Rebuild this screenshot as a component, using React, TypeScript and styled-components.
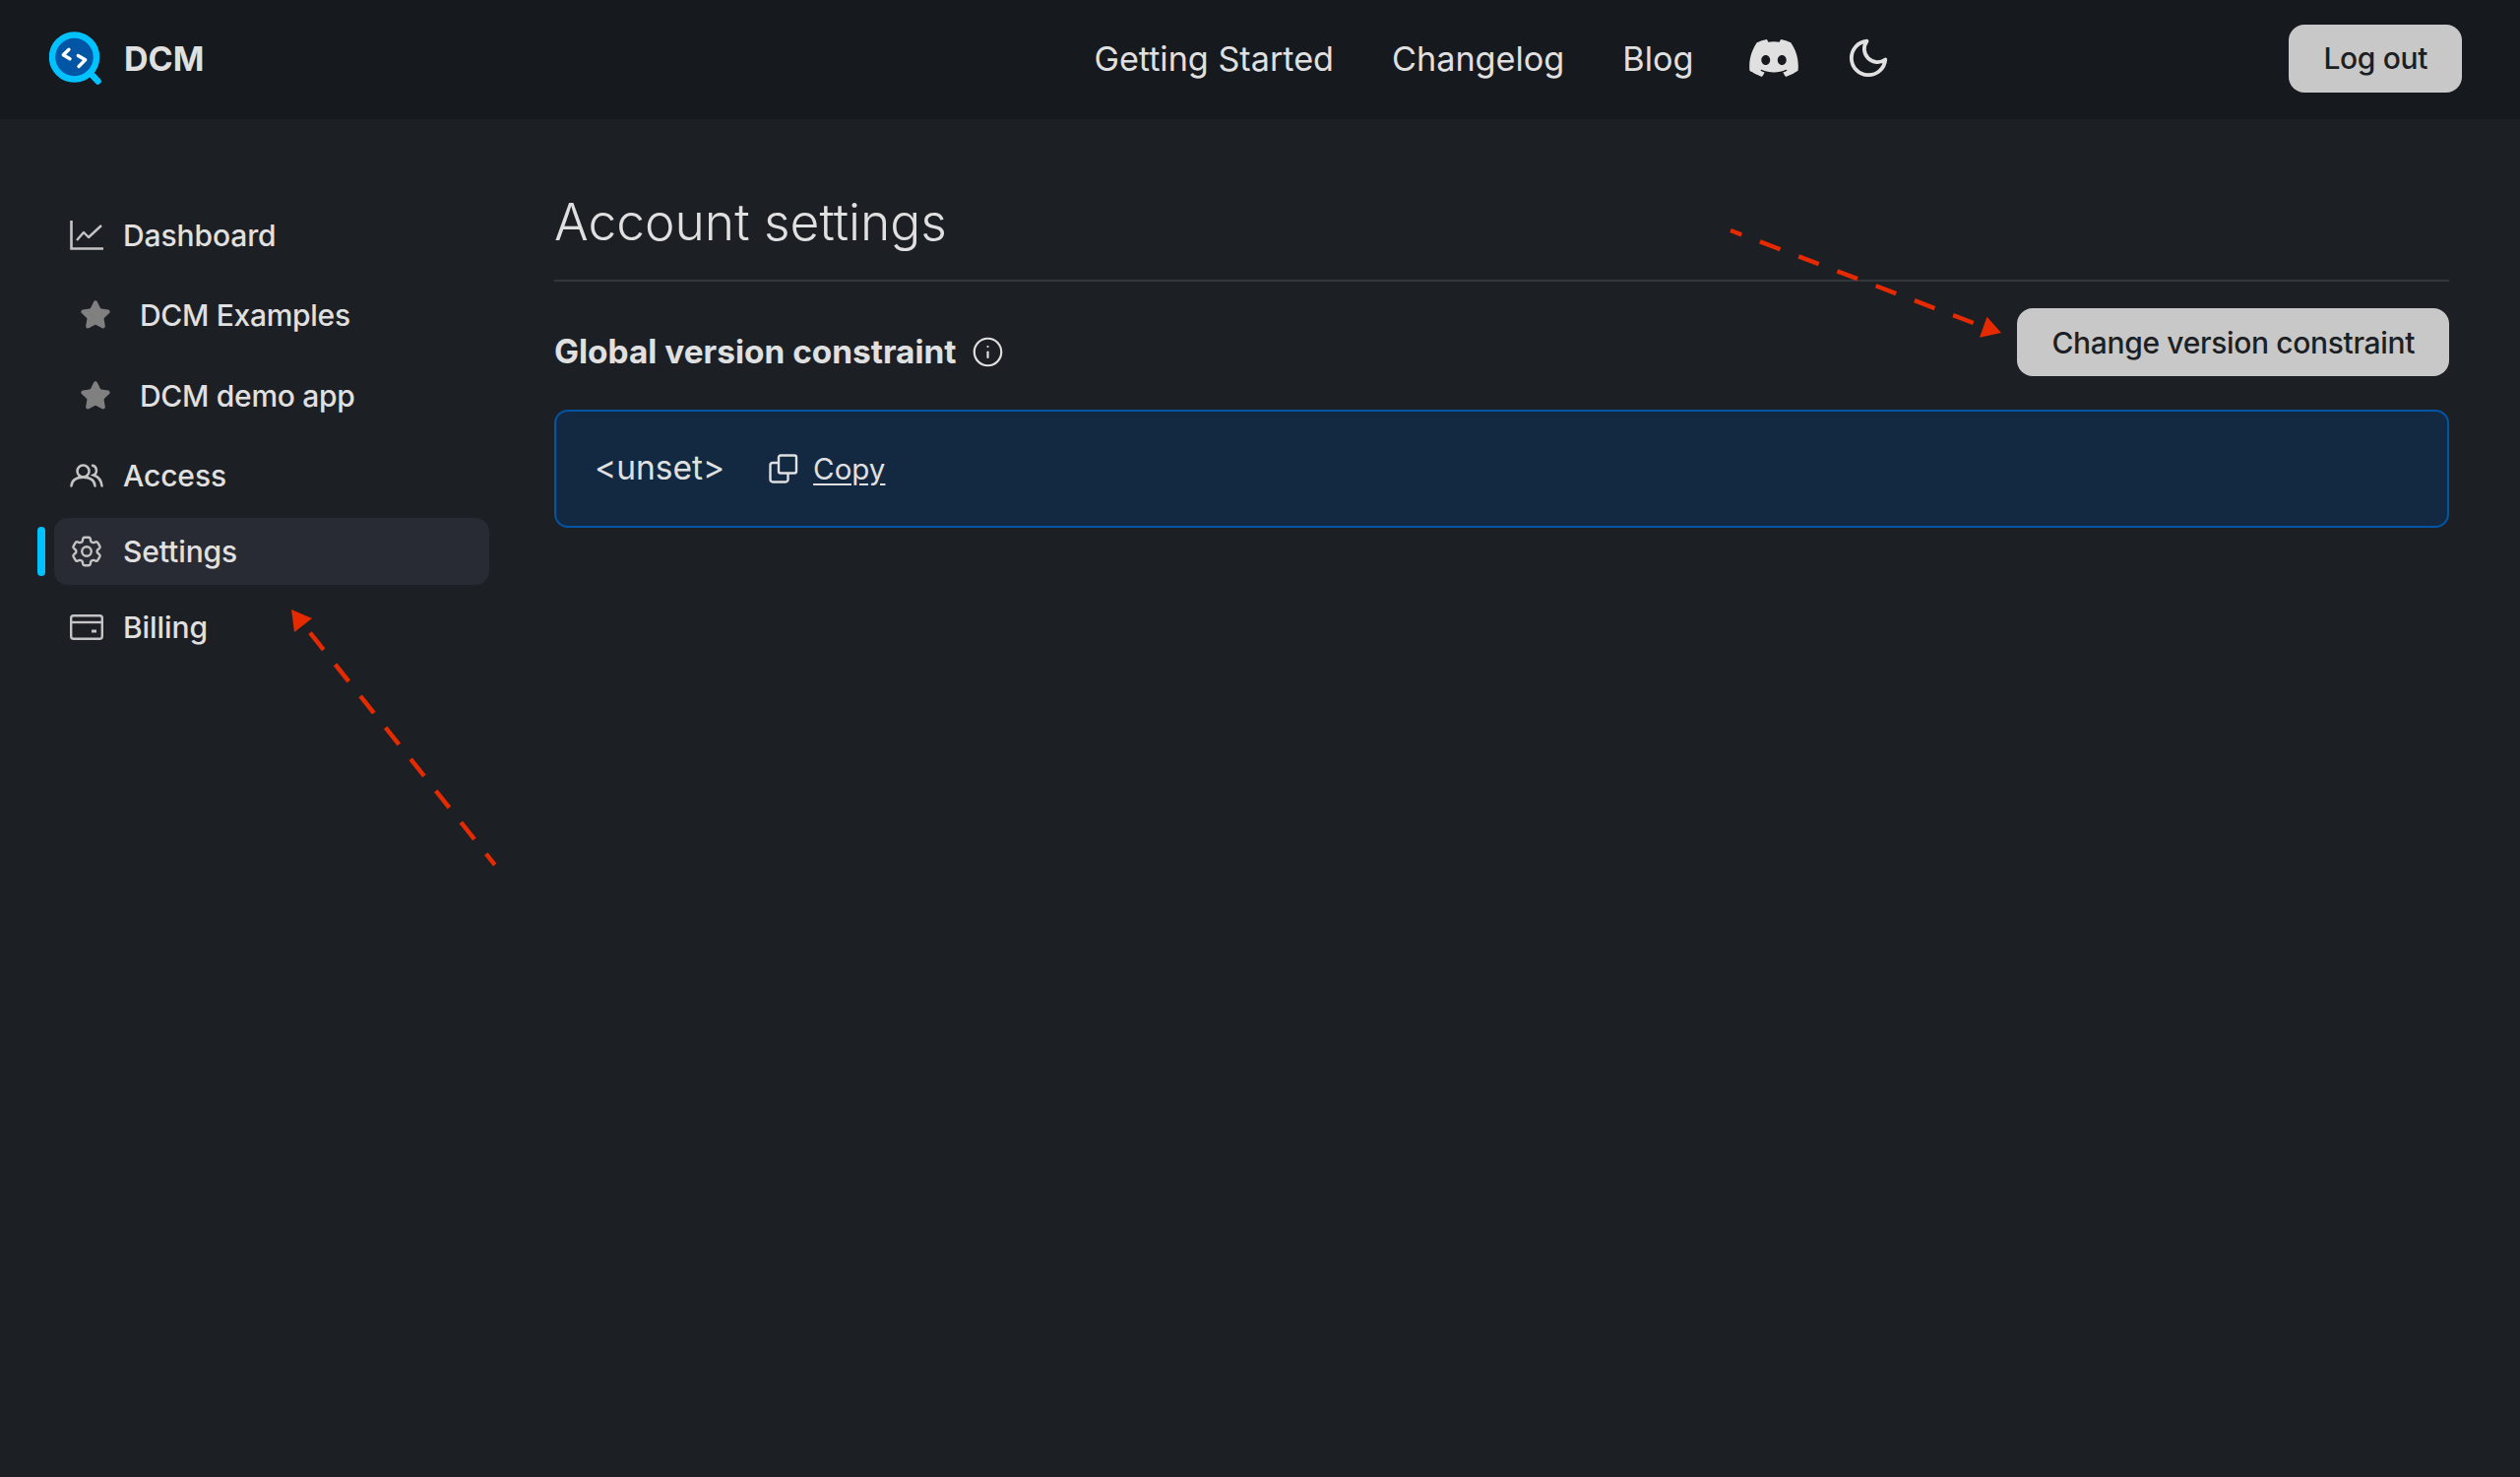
import React from "react";
import styled, { createGlobalStyle } from "styled-components";
import { FaDiscord } from "react-icons/fa";
import { FiMoon } from "react-icons/fi";
import { HiOutlineCog6Tooth } from "react-icons/hi2";
import { Info, Star } from "lucide-react";

const Global = createGlobalStyle`
  html, body { margin: 0; padding: 0; background: #1c1f24; }
  body { font-family: Inter, "Liberation Sans", sans-serif; color: #e0e0e0; }
  * { box-sizing: border-box; }
`;

const Page = styled.div`
  position: relative;
  min-height: 1500px;
  display: flex;
  flex-direction: column;
`;

const Header = styled.header`
  height: 121px;
  background: #16191e;
  display: flex;
  align-items: center;
  padding: 0 59px 3px 50px;
`;

const Brand = styled.div`
  display: flex;
  align-items: center;
  gap: 23px;
  font-size: 34px;
  font-weight: 700;
  color: #e0e0e0;
`;

const TopNav = styled.nav`
  margin-left: 904px;
  display: flex;
  align-items: center;
  gap: 59px;
`;

const TopLink = styled.a`
  font-size: 34.2px;
  font-weight: 400;
  color: #e0e0e0;
`;

const IconSlot = styled.span<{ $pull?: number }>`
  display: flex;
  align-items: center;
  color: #e0e0e0;
  margin-left: ${(p) => p.$pull ?? 0}px;
`;

const Button = styled.button`
  height: 69px;
  padding: 0 35px;
  border: none;
  border-radius: 16px;
  background: #c8c8c8;
  color: #1c1f24;
  font-family: inherit;
  font-size: 30px;
  font-weight: 500;
  letter-spacing: -0.35px;
`;

const LogoutButton = styled(Button)`
  margin-left: auto;
`;

const Body = styled.div`
  display: flex;
  flex: 1;
`;

const Sidebar = styled.aside`
  width: 563px;
  flex: none;
  padding: 84px 66px 0 55px;
  display: flex;
  flex-direction: column;
  gap: 9px;
`;

const NavRow = styled.a<{ $active?: boolean }>`
  position: relative;
  height: 68px;
  display: flex;
  align-items: center;
  gap: 20px;
  padding-left: 16px;
  border-radius: 14px;
  font-size: 30px;
  font-weight: 500;
  letter-spacing: -0.1px;
  color: #e0e0e0;
  background: ${(p) => (p.$active ? "#282b33" : "transparent")};
`;

const RowIcon = styled.span`
  width: 34px;
  flex: none;
  display: flex;
  align-items: center;
  justify-content: center;
  color: #c4c4c4;
  svg { flex: none; }
`;

const ActiveBar = styled.span`
  position: absolute;
  left: -17px;
  top: 9px;
  width: 8px;
  height: 50px;
  border-radius: 4px;
  background: #00c2ff;
`;

const SubList = styled.div`
  margin: -3px 0;
  display: flex;
  flex-direction: column;
`;

const SubRow = styled.a`
  height: 82px;
  display: flex;
  align-items: center;
  gap: 29px;
  padding-left: 26px;
  font-size: 30px;
  font-weight: 500;
  letter-spacing: -0.3px;
  color: #e0e0e0;
  svg { color: #808080; fill: #808080; flex: none; }
`;

const Main = styled.main`
  flex: 1;
  padding: 74px 72px 0 0;
  min-width: 0;
`;

const Title = styled.h1`
  margin: 0;
  padding-bottom: 29px;
  border-bottom: 2px solid #33363b;
  font-size: 51.5px;
  line-height: 60px;
  font-weight: 300;
  color: #e0e0e0;
`;

const SectionHead = styled.div`
  margin-top: 27px;
  display: flex;
  justify-content: space-between;
  align-items: flex-start;
`;

const SectionTitle = styled.h2`
  margin: 0;
  padding-top: 24px;
  display: flex;
  align-items: center;
  gap: 15px;
  font-size: 33.4px;
  line-height: 40px;
  font-weight: 700;
  color: #e0e0e0;
`;

const InfoBox = styled.div`
  margin-top: 34px;
  height: 120px;
  display: flex;
  align-items: center;
  padding-left: 39px;
  border: 2.5px solid #0055a5;
  border-radius: 14px;
  background: #132942;
  font-size: 33.5px;
  color: #e0e0e0;
`;

const Value = styled.span`
  margin-right: 45px;
  position: relative;
  top: -1px;
`;

const CopyLink = styled.a`
  display: flex;
  align-items: center;
  gap: 15px;
  font-size: 29.5px;
  color: #e0e0e0;
  span { text-decoration: underline; text-underline-offset: 4px; }
`;

const Annotation = styled.svg`
  position: absolute;
  left: 0;
  top: 0;
  width: 2560px;
  height: 1500px;
  pointer-events: none;
`;

const Logo = () => (
  <svg width="53" height="55" viewBox="0 0 53 55" fill="none">
    <circle cx="25.5" cy="26" r="22.5" fill="#0055a5" stroke="#00c2ff" strokeWidth="6.5" />
    <path d="M41.5 42 L49.5 50.5" stroke="#00c2ff" strokeWidth="6.5" strokeLinecap="round" />
    <path d="M20 18.2 L14.3 23.8 L21 27.8" stroke="#fff" strokeWidth="3.4" strokeLinecap="round" strokeLinejoin="round" />
    <path d="M29.3 24.5 L36.7 28.8 L30 35.5" stroke="#fff" strokeWidth="3.4" strokeLinecap="round" strokeLinejoin="round" />
  </svg>
);

const ChartIcon = () => (
  <svg width="34" height="30" viewBox="0 0 34 30" fill="none" stroke="currentColor">
    <path d="M1.5 0 V28.5 H34" strokeWidth="2.6" />
    <path d="M7 20 L14 12 L19 17 L32 5" strokeWidth="2.4" strokeLinejoin="round" />
  </svg>
);

const PeopleIcon = () => (
  <svg width="34" height="24" viewBox="0 0 34 24" fill="none" stroke="currentColor" strokeWidth="2.5" strokeLinecap="round">
    <circle cx="13.5" cy="7.5" r="6" />
    <path d="M1.5 22.5 C2 17 6.5 13.8 13.5 13.8 C20.5 13.8 25 17 25.5 22.5" />
    <path d="M23 1.8 C27.5 2.5 28.5 9.5 24 11.5 C28.5 13 32 16.5 32.5 22.5" />
  </svg>
);

const CardIcon = () => (
  <svg width="34" height="26" viewBox="0 0 34 26" fill="none" stroke="currentColor" strokeWidth="2.4">
    <rect x="1.2" y="1.2" width="31.6" height="23.6" rx="2.5" />
    <path d="M1.2 8 H32.8" />
    <path d="M22 17 H27" strokeWidth="3" />
  </svg>
);

const CopyIcon = () => (
  <svg width="30" height="30" viewBox="0 0 30 30" fill="none" stroke="currentColor" strokeWidth="2.4" strokeLinejoin="round">
    <rect x="10" y="1.5" width="18" height="18" rx="2" />
    <path d="M10 9 H4 A2.5 2.5 0 0 0 1.5 11.5 V26 A2.5 2.5 0 0 0 4 28.5 H17 A2.5 2.5 0 0 0 19.5 26 V19.5" />
  </svg>
);

export default function App() {
  return (
    <Page>
      <Global />
      <Header>
        <Brand>
          <Logo />
          DCM
        </Brand>
        <TopNav>
          <TopLink>Getting Started</TopLink>
          <TopLink>Changelog</TopLink>
          <TopLink>Blog</TopLink>
          <IconSlot $pull={-4}><FaDiscord size={54} /></IconSlot>
          <IconSlot $pull={-13.5}><FiMoon size={46} /></IconSlot>
        </TopNav>
        <LogoutButton>Log out</LogoutButton>
      </Header>
      <Body>
        <Sidebar>
          <NavRow><RowIcon><ChartIcon /></RowIcon>Dashboard</NavRow>
          <SubList>
            <SubRow><Star size={32} strokeWidth={2} />DCM Examples</SubRow>
            <SubRow><Star size={32} strokeWidth={2} />DCM demo app</SubRow>
          </SubList>
          <NavRow><RowIcon><PeopleIcon /></RowIcon>Access</NavRow>
          <NavRow $active><ActiveBar /><RowIcon><HiOutlineCog6Tooth size={38} /></RowIcon>Settings</NavRow>
          <NavRow><RowIcon><CardIcon /></RowIcon>Billing</NavRow>
        </Sidebar>
        <Main>
          <Title>Account settings</Title>
          <SectionHead>
            <SectionTitle>
              Global version constraint
              <Info size={33} strokeWidth={1.6} />
            </SectionTitle>
            <Button>Change version constraint</Button>
          </SectionHead>
          <InfoBox>
            <Value>&lt;unset&gt;</Value>
            <CopyLink><CopyIcon /><span>Copy</span></CopyLink>
          </InfoBox>
        </Main>
      </Body>
      <Annotation viewBox="0 0 2560 1500" aria-hidden="true">
        <line x1="2004.7" y1="328" x2="1758" y2="234" stroke="#e62a00" strokeWidth="4.5" strokeDasharray="22 20" />
        <polygon points="2018.5,321.7 2033,338 2011,342.7" fill="#e62a00" />
        <line x1="315" y1="642.7" x2="502.7" y2="878.3" stroke="#e62a00" strokeWidth="4.5" strokeDasharray="22 19" />
        <polygon points="296,619 317,628 299,642" fill="#e62a00" />
      </Annotation>
    </Page>
  );
}
